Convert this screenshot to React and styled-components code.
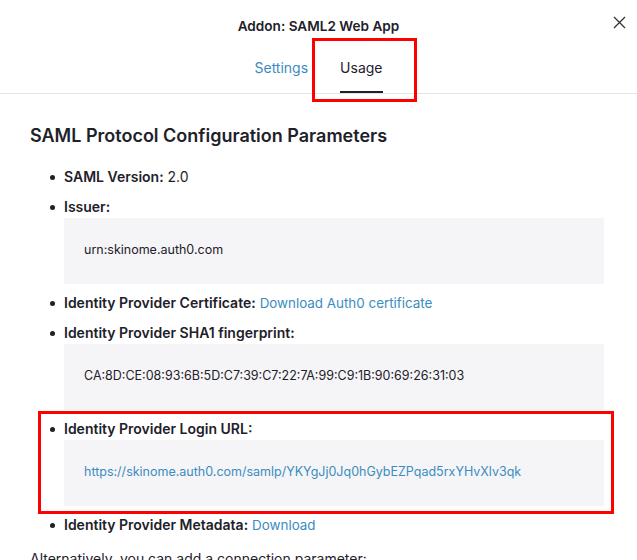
import React from "react";
import styled, { createGlobalStyle } from "styled-components";

const Global = createGlobalStyle`
  html, body { margin: 0; padding: 0; background: #fff; }
  body {
    font-family: Inter, "Noto Sans", "Liberation Sans", sans-serif;
    color: #1e212a;
    -webkit-font-smoothing: antialiased;
  }
`;

const Page = styled.div`
  position: relative;
  width: 637px;
  height: 560px;
  overflow: hidden;
`;

const Header = styled.header`
  border-bottom: 1px solid #e3e4e6;
  display: flex;
  flex-direction: column;
  align-items: center;
`;

const TitleRow = styled.div`
  width: 100%;
  display: grid;
  grid-template-columns: 1fr auto 1fr;
  align-items: center;
  padding-top: 15px;
  box-sizing: border-box;
`;

const Title = styled.h2`
  grid-column: 2;
  margin: 0;
  font-size: 13.6px;
  font-weight: 600;
  line-height: 22px;
`;

const Close = styled.button`
  justify-self: end;
  margin-right: 9px;
  width: 18px;
  height: 18px;
  padding: 0;
  border: 0;
  background: none;
  display: flex;
  align-items: center;
  justify-content: center;
  transform: translateY(-4px);
`;

const Tabs = styled.nav`
  display: flex;
  gap: 32px;
  margin-top: 21px;
`;

const Tab = styled.span`
  font-size: 14px;
  line-height: 20px;
  padding-bottom: 13px;
  border-bottom: 2px solid ${(p) => (p.$active ? "#1e212a" : "transparent")};
  color: ${(p) => (p.$active ? "#1e212a" : "#3b8cc0")};
`;

const Content = styled.main`
  padding: 30px 33px 0 30px;
`;

const Heading = styled.h3`
  margin: 0 0 19px;
  font-size: 18px;
  font-weight: 600;
  line-height: 24px;
`;

const List = styled.ul`
  margin: 0;
  padding: 0 0 0 34px;
  list-style: none;
`;

const Item = styled.li`
  position: relative;
  font-size: 14px;
  line-height: 20px;
  margin-top: ${(p) => (p.$gap !== undefined ? p.$gap : 10)}px;
  &::before {
    content: "";
    position: absolute;
    left: -14px;
    top: 8px;
    width: 5px;
    height: 5px;
    border-radius: 50%;
    background: #1e212a;
  }
`;

const Label = styled.strong`
  font-weight: 600;
`;

const Link = styled.a`
  color: #3b8cc0;
  text-decoration: none;
  font-size: ${(p) => (p.$inline ? "13.4px" : "inherit")};
`;

const CodeBox = styled.pre`
  margin: 1px 0 0;
  background: #f5f5f7;
  padding: 22px 20px 24px;
  font-family: Inter, "Noto Sans", "Liberation Sans", sans-serif;
  font-size: 12.5px;
  line-height: 20px;
  color: #1e212a;
  white-space: pre-wrap;
`;

const Para = styled.p`
  margin: 14px 0 0;
  font-size: 14px;
  line-height: 20px;
`;

const Highlight = styled.div`
  position: absolute;
  border: 3px solid #ff0000;
  box-sizing: border-box;
`;

export default function App() {
  return (
    <Page>
      <Global />
      <Header>
        <TitleRow>
          <Title>Addon: SAML2 Web App</Title>
          <Close aria-label="Close">
            <svg width="13" height="13" viewBox="0 0 13 13">
              <path d="M1 1L12 12M12 1L1 12" stroke="#333" strokeWidth="1.3" />
            </svg>
          </Close>
        </TitleRow>
        <Tabs>
          <Tab>Settings</Tab>
          <Tab $active>Usage</Tab>
        </Tabs>
      </Header>
      <Content>
        <Heading>SAML Protocol Configuration Parameters</Heading>
        <List>
          <Item $gap={0}>
            <Label>SAML Version:</Label> 2.0
          </Item>
          <Item>
            <Label>Issuer:</Label>
            <CodeBox>urn:skinome.auth0.com</CodeBox>
          </Item>
          <Item $gap={9}>
            <Label>Identity Provider Certificate:</Label>{" "}
            <Link $inline href="#">Download Auth0 certificate</Link>
          </Item>
          <Item>
            <Label>Identity Provider SHA1 fingerprint:</Label>
            <CodeBox>CA:8D:CE:08:93:6B:5D:C7:39:C7:22:7A:99:C9:1B:90:69:26:31:03</CodeBox>
          </Item>
          <Item $gap={9}>
            <Label>Identity Provider Login URL:</Label>
            <CodeBox>
              <Link href="#">https://skinome.auth0.com/samlp/YKYgJj0Jq0hGybEZPqad5rxYHvXlv3qk</Link>
            </CodeBox>
          </Item>
          <Item $gap={9}>
            <Label>Identity Provider Metadata:</Label> <Link $inline href="#">Download</Link>
          </Item>
        </List>
        <Para>Alternatively, you can add a connection parameter:</Para>
      </Content>
      <Highlight style={{ left: 312, top: 38, width: 105, height: 64 }} />
      <Highlight style={{ left: 38, top: 411, width: 576, height: 103 }} />
    </Page>
  );
}
